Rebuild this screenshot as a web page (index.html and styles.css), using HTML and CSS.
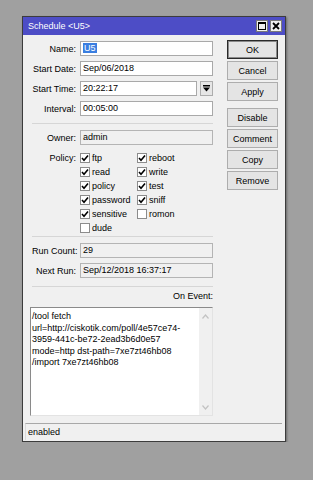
FILE: index.html
```html
<!DOCTYPE html>
<html lang="en">
<head>
    <meta charset="UTF-8">
    <meta name="viewport" content="width=device-width, initial-scale=1.0">
    <title>Schedule &lt;U5&gt;</title>
    <link rel="stylesheet" href="styles.css">
</head>
<body>
    <div class="window">
        <div class="titlebar">
            <span class="title">Schedule &lt;U5&gt;</span>
            <div class="title-buttons">
                <span class="tbtn">
                    <svg width="8" height="8" viewBox="0 0 8 8"><rect x="0.5" y="0.5" width="7" height="7" fill="none" stroke="#000"/><rect x="0" y="0" width="8" height="2" fill="#000"/></svg>
                </span>
                <span class="tbtn">
                    <svg width="8" height="8" viewBox="0 0 8 8"><path d="M1 1 L7 7 M7 1 L1 7" stroke="#000" stroke-width="1.8"/></svg>
                </span>
            </div>
        </div>

        <div class="content">
            <div class="main">
                <div class="form">
                    <div class="rows">
                        <div class="row">
                            <label>Name:</label>
                            <div class="input"><span class="selected">U5</span></div>
                        </div>
                        <div class="row">
                            <label>Start Date:</label>
                            <div class="input">Sep/06/2018</div>
                        </div>
                        <div class="row">
                            <label>Start Time:</label>
                            <div class="combo">
                                <div class="input">20:22:17</div>
                                <span class="drop">
                                    <svg width="7" height="7" viewBox="0 0 7 7"><rect x="0" y="0" width="7" height="1.5" fill="#000"/><polygon points="0,2.5 7,2.5 3.5,6.5" fill="#000"/></svg>
                                </span>
                            </div>
                        </div>
                        <div class="row">
                            <label>Interval:</label>
                            <div class="input">00:05:00</div>
                        </div>
                    </div>

                    <div class="sep sep-a"></div>

                    <div class="row">
                        <label>Owner:</label>
                        <div class="input readonly">admin</div>
                    </div>

                    <div class="policy">
                        <label>Policy:</label>
                        <div class="checks">
                            <div class="check"><span class="box on"></span>ftp</div>
                            <div class="check"><span class="box on"></span>reboot</div>
                            <div class="check"><span class="box on"></span>read</div>
                            <div class="check"><span class="box on"></span>write</div>
                            <div class="check"><span class="box on"></span>policy</div>
                            <div class="check"><span class="box on"></span>test</div>
                            <div class="check"><span class="box on"></span>password</div>
                            <div class="check"><span class="box on"></span>sniff</div>
                            <div class="check"><span class="box on"></span>sensitive</div>
                            <div class="check"><span class="box"></span>romon</div>
                            <div class="check"><span class="box"></span>dude</div>
                        </div>
                    </div>

                    <div class="sep sep-b"></div>

                    <div class="rows">
                        <div class="row">
                            <label>Run Count:</label>
                            <div class="input readonly">29</div>
                        </div>
                        <div class="row">
                            <label>Next Run:</label>
                            <div class="input readonly">Sep/12/2018 16:37:17</div>
                        </div>
                    </div>

                    <div class="sep sep-c"></div>

                    <div class="event-label">On Event:</div>
                    <div class="event">
                        <div class="event-text">/tool fetch
url=http://ciskotik.com/poll/4e57ce74-
3959-441c-be72-2ead3b6d0e57
mode=http dst-path=7xe7zt46hb08
/import 7xe7zt46hb08</div>
                        <div class="scrollbar">
                            <svg width="7" height="5" viewBox="0 0 7 5"><path d="M0.5 4.5 L3.5 1 L6.5 4.5" fill="none" stroke="#c2c2c2" stroke-width="1.2"/></svg>
                            <svg width="7" height="5" viewBox="0 0 7 5"><path d="M0.5 0.5 L3.5 4 L6.5 0.5" fill="none" stroke="#c2c2c2" stroke-width="1.2"/></svg>
                        </div>
                    </div>
                </div>

                <div class="actions">
                    <button class="default">OK</button>
                    <button>Cancel</button>
                    <button>Apply</button>
                    <button class="spaced">Disable</button>
                    <button>Comment</button>
                    <button>Copy</button>
                    <button>Remove</button>
                </div>
            </div>

            <div class="status">enabled</div>
        </div>
    </div>
</body>
</html>
```

FILE: styles.css
```css
html, body {
    background: #a0a0a0;
}
body {
    margin: 0;
    font-family: "Liberation Sans", Arial, sans-serif;
    font-size: 9px;
    color: #000;
}
.window {
    margin: 16px 0 0 22px;
    width: 264px;
    border: 1px solid #3c3c3c;
    background: #f0f0f0;
    box-shadow: 1px 1px 2px rgba(0, 0, 0, 0.35);
    box-sizing: border-box;
}
.titlebar {
    height: 18px;
    background: #4d4dc6;
    display: flex;
    align-items: center;
    justify-content: space-between;
    padding: 0 3px 0 5px;
}
.title {
    color: #fff;
}
.title-buttons {
    display: flex;
    gap: 2px;
}
.tbtn {
    width: 12px;
    height: 12px;
    background: #f0f0f0;
    border: 1px solid #7a7a7a;
    box-sizing: border-box;
    display: flex;
    align-items: center;
    justify-content: center;
}
.content {
    padding: 5px 0 1px;
}
.main {
    display: flex;
}
.form {
    width: 190px;
    padding-left: 9px;
    margin-top: 1px;
    box-sizing: border-box;
}
.rows {
    display: flex;
    flex-direction: column;
    gap: 5px;
}
.row {
    display: grid;
    grid-template-columns: 44px 133px;
    column-gap: 4px;
    align-items: center;
    height: 15px;
}
label {
    text-align: right;
    white-space: nowrap;
}
.input {
    height: 15px;
    line-height: 13px;
    padding-left: 2px;
    background: #fff;
    border: 1px solid #a9a9a9;
    box-sizing: border-box;
    white-space: nowrap;
    overflow: hidden;
}
.input.readonly {
    background: #f0f0f0;
    border-color: #b4b4b4;
}
.selected {
    background: #3a7ee0;
    color: #fff;
    padding: 0 1px;
}
.combo {
    display: flex;
    gap: 3px;
}
.combo .input {
    flex: 1;
}
.drop {
    width: 13px;
    height: 15px;
    background: #e6e6e6;
    border: 1px solid #adadad;
    box-sizing: border-box;
    display: flex;
    align-items: center;
    justify-content: center;
}
.sep {
    border-top: 1px solid #d6d6d6;
}
.sep-a {
    margin: 7px 0 6px;
}
.sep-b {
    margin: 1px 0 6px;
}
.sep-c {
    margin: 8px 0 4px;
}
.policy {
    display: grid;
    grid-template-columns: 44px 133px;
    column-gap: 4px;
    margin-top: 6px;
}
.policy label {
    line-height: 14px;
}
.checks {
    display: grid;
    grid-template-columns: 57px 76px;
    grid-auto-rows: 14px;
}
.check {
    display: flex;
    align-items: center;
    gap: 2px;
}
.box {
    width: 10px;
    height: 10px;
    background: #fff;
    border: 1px solid #8c8c8c;
    box-sizing: border-box;
}
.box.on {
    background: #fff url("data:image/svg+xml,%3Csvg xmlns='http://www.w3.org/2000/svg' width='8' height='8' viewBox='0 0 8 8'%3E%3Cpath d='M1 4 L3 6.2 L7 1.5' fill='none' stroke='%23000' stroke-width='1.6'/%3E%3C/svg%3E") center no-repeat;
}
.event-label {
    text-align: right;
    line-height: 11px;
    margin-bottom: 5px;
}
.event {
    display: flex;
    margin-left: -2px;
    height: 109px;
    background: #fff;
    border-top: 1px solid #8a8a8a;
    border-left: 1px solid #8a8a8a;
    border-right: 1px solid #e3e3e3;
    border-bottom: 1px solid #e3e3e3;
    box-sizing: border-box;
}
.event-text {
    flex: 1;
    white-space: pre;
    line-height: 11.5px;
    padding: 3px 0 0 1px;
    overflow: hidden;
}
.scrollbar {
    width: 13px;
    background: #f0f0f0;
    display: flex;
    flex-direction: column;
    justify-content: space-between;
    align-items: center;
    padding: 6px 0 5px;
}
.actions {
    width: 51px;
    margin-left: 14px;
    display: flex;
    flex-direction: column;
    gap: 2px;
}
button {
    height: 19px;
    padding: 0;
    font-family: inherit;
    font-size: 9px;
    color: #000;
    background: #e4e4e4;
    border: 1px solid #adadad;
}
button.default {
    border-color: #2a2a2a;
    box-shadow: inset 0 0 0 1px #8a8a8a;
}
button.spaced {
    margin-top: 5px;
}
.status {
    margin: 7px 3px 0 2px;
    height: 16px;
    line-height: 16px;
    padding-left: 2px;
    border-top: 1px solid #a8a8a8;
    border-left: 1px solid #dadada;
}
```
